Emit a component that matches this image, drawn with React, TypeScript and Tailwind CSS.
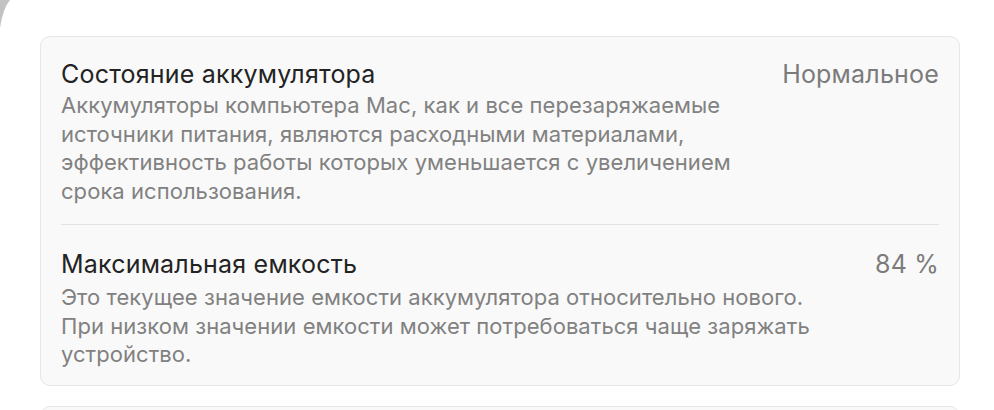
import React from "react";

const font = { fontFamily: 'Inter, "Noto Sans", "Liberation Sans", sans-serif' };

function Row({
  title,
  value,
  lines,
  gap,
}: {
  title: string;
  value: string;
  lines: string[];
  gap: string;
}) {
  return (
    <div>
      <div className="flex items-center justify-between">
        <div className="text-[25px] leading-[30px] tracking-[0.2px] text-[#232323]">{title}</div>
        <div className="text-[25px] leading-[30px] tracking-[0.2px] text-[#7b7b7b]">{value}</div>
      </div>
      <div className={`${gap} text-[22px] leading-[28.5px] tracking-[0.05px] text-[#818181]`}>
        {lines.map((l, i) => (
          <div key={i}>{l}</div>
        ))}
      </div>
    </div>
  );
}

export default function App() {
  return (
    <div className="relative h-[410px] w-[994px] overflow-hidden bg-white" style={font}>
      <svg className="absolute left-0 top-0" width="12" height="30" viewBox="0 0 12 30">
        <path d="M0 0 L10 0 Q3 8 0 28 Z" fill="#9a9a9a" opacity="0.6" />
      </svg>
      <div className="pl-[40px] pt-[36px]">
        <div className="w-[920px] rounded-[10px] border border-[#e6e6e6] bg-[#f9f9f9] px-[20px] pb-[16px] pt-[22px]">
          <Row
            gap="mt-[2px]"
            title="Состояние аккумулятора"
            value="Нормальное"
            lines={[
              "Аккумуляторы компьютера Mac, как и все перезаряжаемые",
              "источники питания, являются расходными материалами,",
              "эффективность работы которых уменьшается с увеличением",
              "срока использования.",
            ]}
          />
          <div className="mb-[24px] mt-[19px] h-px bg-[#e4e4e4]" />
          <Row
            gap="mt-[4px]"
            title="Максимальная емкость"
            value="84 %"
            lines={[
              "Это текущее значение емкости аккумулятора относительно нового.",
              "При низком значении емкости может потребоваться чаще заряжать",
              "устройство.",
            ]}
          />
        </div>
        <div className="mt-[20px] h-[40px] w-[920px] rounded-[10px] border border-[#e6e6e6] bg-[#f9f9f9]" />
      </div>
    </div>
  );
}
